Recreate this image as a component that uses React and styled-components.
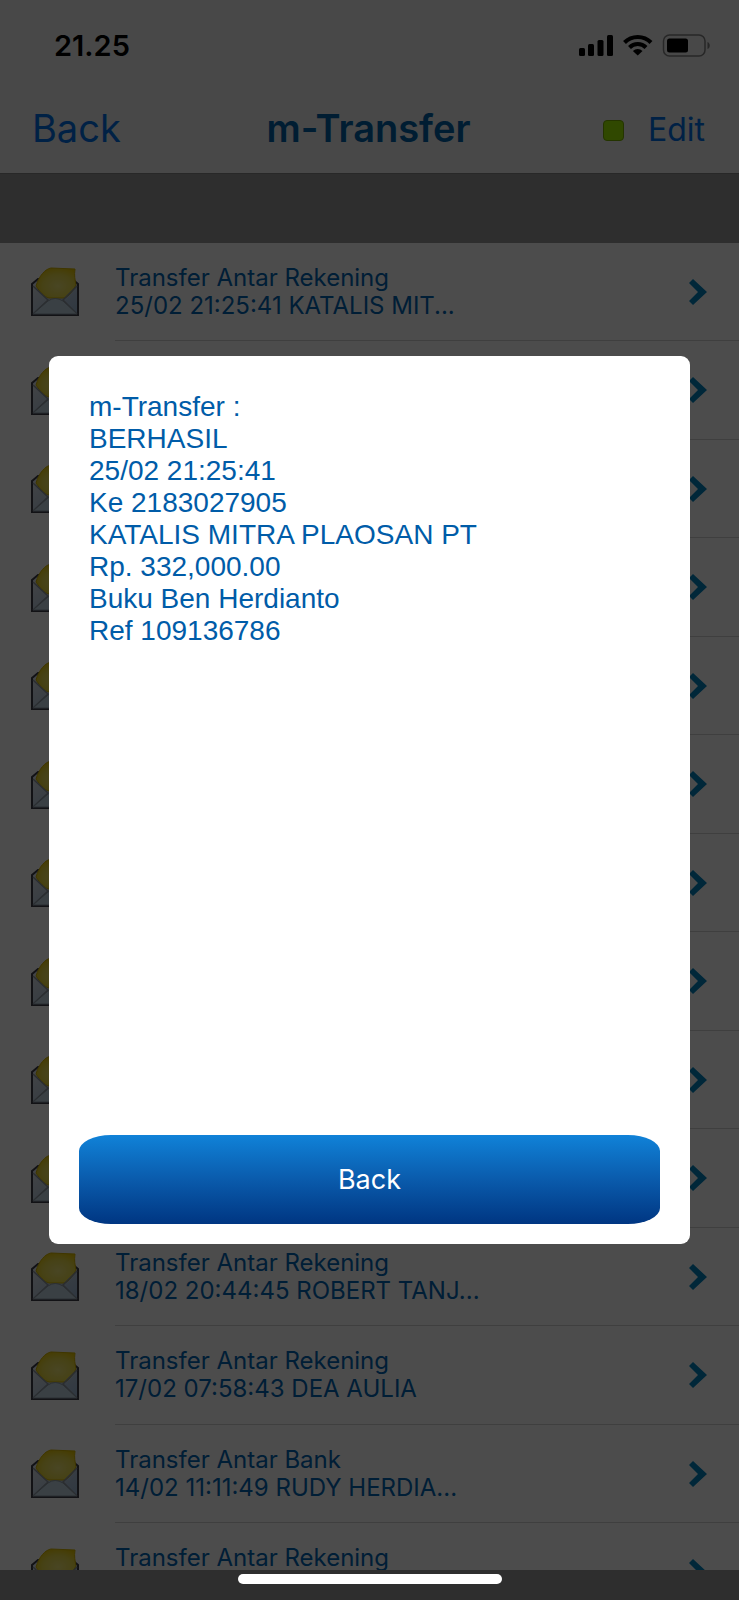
import React, { useState } from "react";
import styled, { createGlobalStyle } from "styled-components";

const transfers = [
   { title: "Transfer Antar Rekening", detail: "25/02 21:25:41 KATALIS MIT..." },
   { title: "", detail: "" },
   { title: "", detail: "" },
   { title: "", detail: "" },
   { title: "", detail: "" },
   { title: "", detail: "" },
   { title: "", detail: "" },
   { title: "", detail: "" },
   { title: "", detail: "" },
   { title: "", detail: "" },
   { title: "Transfer Antar Rekening", detail: "18/02 20:44:45 ROBERT TANJ..." },
   { title: "Transfer Antar Rekening", detail: "17/02 07:58:43 DEA AULIA" },
   { title: "Transfer Antar Bank", detail: "14/02 11:11:49 RUDY HERDIA..." },
   { title: "Transfer Antar Rekening", detail: "" },
];

const receipt = [
   "m-Transfer :",
   "BERHASIL",
   "25/02 21:25:41",
   "Ke 2183027905",
   "KATALIS MITRA PLAOSAN PT",
   "Rp. 332,000.00",
   "Buku Ben Herdianto",
   "Ref 109136786",
];

const StatusIcons = () => (
   <svg width="132" height="24" viewBox="0 0 132 24" aria-hidden="true">
      <rect x="0" y="14" width="6" height="8" rx="1.5" />
      <rect x="9" y="10" width="6" height="12" rx="1.5" />
      <rect x="18.5" y="6" width="6" height="16" rx="1.5" />
      <rect x="28" y="1" width="6" height="21" rx="1.5" />
      <g fill="none" stroke="#000" strokeWidth="4">
         <path d="M45.5 8.5a18.5 18.5 0 0 1 26.5 0" />
         <path d="M50.5 13.5a11.5 11.5 0 0 1 16.5 0" />
      </g>
      <path d="M58.7 21.5l-4.8-4.6a7 7 0 0 1 9.6 0z" />
      <rect
         x="84.5"
         y="1"
         width="41.5"
         height="21"
         rx="6"
         fill="none"
         stroke="#828282"
         strokeWidth="1.5"
      />
      <rect x="88" y="4.5" width="21" height="14" rx="2.5" />
      <path d="M128.5 8c3 1 3 6 0 7z" fill="#828282" />
   </svg>
);

const Envelope = () => (
   <svg width="48" height="50" viewBox="0 0 48 50" aria-hidden="true">
      <defs>
         <linearGradient id="envelope" x1="0" y1="0" x2="1" y2="1">
            <stop offset="0" stopColor="#e4e8ec" />
            <stop offset="1" stopColor="#9cb8d8" />
         </linearGradient>
         <radialGradient id="letter" cx="0.55" cy="0.6" r="0.65">
            <stop offset="0" stopColor="#f4ea78" />
            <stop offset="0.6" stopColor="#ecdc48" />
            <stop offset="1" stopColor="#e8c800" />
         </radialGradient>
      </defs>
      <path
         d="M1 17L7 12H41L47 17V48H1z"
         fill="url(#envelope)"
         stroke="#3c3c48"
         strokeWidth="2"
      />
      <path
         d="M5 19C8 9 14 2 20 1L44 2C43 9 44 12 45 18C40 27 36 31 32 31H18C13 30 9 25 5 19z"
         fill="url(#letter)"
         stroke="#d4b400"
         strokeWidth="1"
      />
      <path
         d="M2 19L17 33L2 47M46 19L32 33L46 47"
         fill="none"
         stroke="#8f979f"
         strokeWidth="1.5"
      />
      <path
         d="M2 47L17 34Q24 29 32 34L46 47z"
         fill="#c4d8e4"
         stroke="#8f9ba8"
         strokeWidth="1"
      />
   </svg>
);

const Chevron = () => (
   <svg width="18" height="26" viewBox="0 0 18 26" aria-hidden="true">
      <path d="M4 0L18 13L4 26L0 22L9 13L0 4z" fill="#0084c0" />
   </svg>
);

const App = () => {
   const [modelIsOpen, setModelIsOpen] = useState(true);

   return (
      <Page>
         <GlobalStyle />
         <StatusBar>
            <Clock>21.25</Clock>
            <StatusIcons />
         </StatusBar>
         <NavBar>
            <NavButton $size="38px">Back</NavButton>
            <h1>m-Transfer</h1>
            <Actions>
               <Indicator />
               <NavButton $size="32px">Edit</NavButton>
            </Actions>
         </NavBar>
         <Band />
         <List>
            {transfers.map((transfer, index) => (
               <Row key={index}>
                  <RowButton onClick={() => setModelIsOpen(true)}>
                     <Envelope />
                     <RowBody>
                        <RowText>
                           <span>{transfer.title}</span>
                           <span>{transfer.detail}</span>
                        </RowText>
                        <Chevron />
                     </RowBody>
                  </RowButton>
               </Row>
            ))}
         </List>
         <Footer>
            <HomeBar />
         </Footer>
         {modelIsOpen ? (
            <Overlay>
               <Dialog role="dialog" aria-modal="true" aria-label="m-Transfer">
                  <Receipt>
                     {receipt.map((line) => (
                        <p key={line}>{line}</p>
                     ))}
                  </Receipt>
                  <BackButton onClick={() => setModelIsOpen(false)}>
                     Back
                  </BackButton>
               </Dialog>
            </Overlay>
         ) : null}
      </Page>
   );
};

const GlobalStyle = createGlobalStyle`
   * {
      box-sizing: border-box;
   }
   body {
      margin: 0;
      font-family: Inter, "Liberation Sans", sans-serif;
   }
   h1, p, ul {
      margin: 0;
      padding: 0;
   }
   button {
      border: 0;
      padding: 0;
      background: none;
      font-family: inherit;
      cursor: pointer;
   }
`;

const Page = styled.div`
   position: relative;
   display: flex;
   flex-direction: column;
   height: 100vh;
   overflow: hidden;
   background-color: #ffffff;
`;

const StatusBar = styled.div`
   flex: none;
   display: flex;
   justify-content: space-between;
   align-items: center;
   height: 91px;
   padding: 0 28px 0 54px;
   background-color: #f0f0f0;
`;

const Clock = styled.span`
   font-size: 29px;
   font-weight: 600;
   color: #000000;
`;

const NavBar = styled.div`
   flex: none;
   display: grid;
   grid-template-columns: 1fr auto 1fr;
   align-items: center;
   height: 82px;
   padding: 0 34px 8px 32px;
   background-color: #f0f0f0;
   h1 {
      font-size: 38px;
      line-height: 48px;
      font-weight: 600;
      color: #0062a8;
   }
`;

const NavButton = styled.button`
   justify-self: start;
   font-size: ${(props) => props.$size};
   line-height: 48px;
   color: #0070e8;
`;

const Actions = styled.div`
   display: flex;
   justify-content: flex-end;
   align-items: center;
   gap: 24px;
   padding-top: 4px;
`;

const Indicator = styled.span`
   width: 21px;
   height: 21px;
   border: 1px solid #78b000;
   border-radius: 4px;
   background-color: #a0f000;
`;

const Band = styled.div`
   flex: none;
   height: 70px;
   border-top: 1px solid #888888;
   background-color: #999999;
`;

const List = styled.ul`
   flex: 1;
   min-height: 0;
   overflow: hidden;
   list-style: none;
`;

const Row = styled.li`
   height: 98px;
   &:nth-child(even) {
      height: 99px;
   }
`;

const RowButton = styled.button`
   display: flex;
   align-items: center;
   gap: 36px;
   width: 100%;
   height: 100%;
   padding-left: 31px;
`;

const RowBody = styled.span`
   flex: 1;
   display: flex;
   justify-content: space-between;
   align-items: center;
   height: 100%;
   padding-right: 32px;
   border-bottom: 1px solid #d4d4d4;
`;

const RowText = styled.span`
   display: flex;
   flex-direction: column;
   height: 56px;
   font-size: 24px;
   line-height: 28px;
   text-align: left;
   color: #0064b4;
`;

const Footer = styled.div`
   flex: none;
   display: flex;
   justify-content: center;
   align-items: flex-start;
   height: 30px;
   padding-top: 4px;
   background-color: #999999;
`;

const HomeBar = styled.div`
   z-index: 2;
   width: 264px;
   height: 10px;
   border-radius: 5px;
   background-color: #ffffff;
`;

const Overlay = styled.div`
   position: absolute;
   inset: 0;
   z-index: 1;
   display: flex;
   align-items: center;
   padding: 0 49px;
   background-color: rgba(0, 0, 0, 0.7);
`;

const Dialog = styled.div`
   flex: 1;
   display: flex;
   flex-direction: column;
   padding: 35px 30px 20px;
   border-radius: 9px;
   background-color: #ffffff;
`;

const Receipt = styled.div`
   min-height: 744px;
   padding: 0 10px;
   font-family: "Liberation Sans", Arial, sans-serif;
   font-size: 28px;
   line-height: 32px;
   color: #005ca8;
`;

const BackButton = styled.button`
   height: 89px;
   border-radius: 32px / 16px;
   background-image: linear-gradient(#1082d8, #0a5bac 50%, #003682);
   font-size: 27px;
   color: #ffffff;
`;

export default App;
